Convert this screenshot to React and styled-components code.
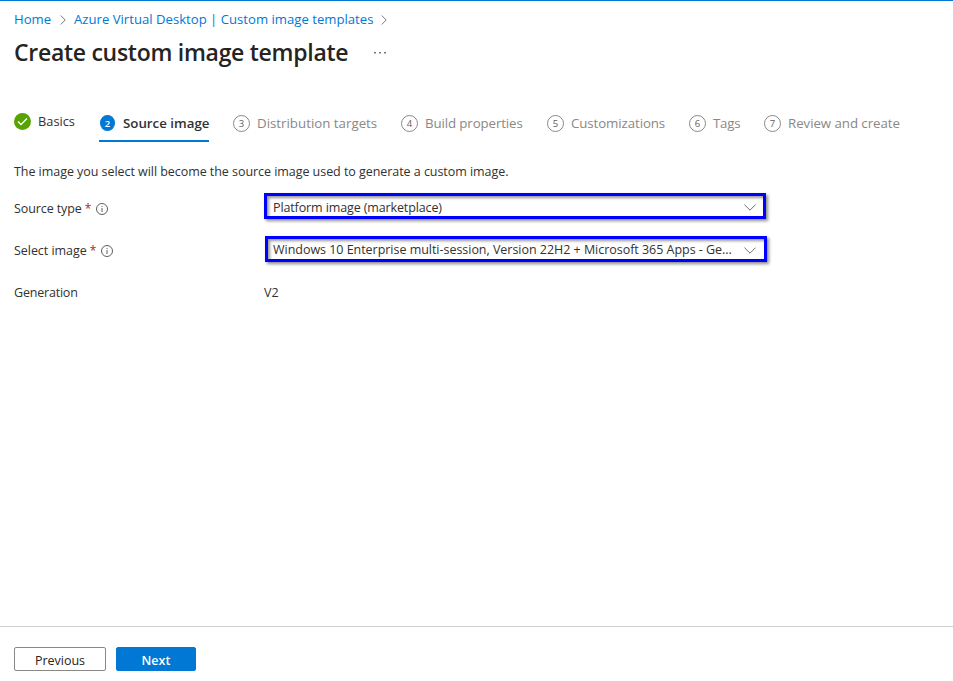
import React from "react";
import styled, { createGlobalStyle } from "styled-components";

const GlobalStyle = createGlobalStyle`
  * { box-sizing: border-box; }
  body {
    margin: 0;
    background: #fff;
    color: #323130;
    font-family: "Segoe UI", "Open Sans", "Noto Sans", sans-serif;
    font-size: 12.5px;
    line-height: 18px;
  }
`;

const Page = styled.div`
  display: flex;
  flex-direction: column;
  height: 681px;
  border-top: 1px solid #0078d4;
  overflow: hidden;
`;

const Text = styled.span`
  white-space: nowrap;
  letter-spacing: ${(p) => p.$ls || 0}px;
`;

const Breadcrumb = styled.nav`
  display: flex;
  align-items: center;
  height: 18px;
  margin: 9px 0 0 14px;
`;

const Crumb = styled.a`
  width: ${(p) => p.$w}px;
  color: #0078d4;
  font-size: 13.15px;
  white-space: nowrap;
`;

const CrumbArrow = styled.svg`
  display: block;
  width: 6px;
  height: 10px;
  margin: 2px 8px 0;
  fill: none;
  stroke: #7a7876;
`;

const TitleRow = styled.header`
  display: flex;
  align-items: center;
  height: 32px;
  margin: 8px 0 0 14px;
`;

const Title = styled.h1`
  width: 360px;
  margin: 0;
  color: #252423;
  font-size: 23px;
  font-weight: 600;
  line-height: 32px;
  white-space: nowrap;
  letter-spacing: -0.28px;
`;

const More = styled.svg`
  width: 12px;
  height: 2px;
  margin-top: 2px;
  fill: #797775;
`;

const Tabs = styled.div`
  display: flex;
  align-items: flex-start;
  gap: 24px;
  height: 37px;
  margin: 37px 0 0 14px;
`;

const Tab = styled.div`
  display: flex;
  flex: none;
  align-items: center;
  width: ${(p) => p.$w}px;
  height: ${(p) => (p.$done ? 34 : 37)}px;
  padding-left: ${(p) => (p.$active ? 1 : 0)}px;
  border-bottom: 2px solid ${(p) => (p.$active ? "#0078d4" : "transparent")};
  color: ${(p) => (p.$active || p.$done ? "#323130" : "#8a8886")};
  font-size: ${(p) => (p.$done ? 12.8 : 13.3)}px;
  font-weight: ${(p) => (p.$active ? 600 : 400)};
`;

const Step = styled.span`
  display: flex;
  flex: none;
  align-items: center;
  justify-content: center;
  width: ${(p) => (p.$active ? 15 : 17)}px;
  height: ${(p) => (p.$active ? 16 : 17)}px;
  margin: 1px ${(p) => (p.$active ? 8 : 7)}px 0 0;
  border: 1px solid ${(p) => (p.$active ? "#0078d4" : "#8a8886")};
  border-radius: 50%;
  background: ${(p) => (p.$active ? "#0078d4" : "#fff")};
  color: ${(p) => (p.$active ? "#fff" : "#605e5c")};
  font-size: 9.5px;
  line-height: 15px;
`;

const Check = styled.svg`
  flex: none;
  width: 17px;
  height: 17px;
  margin: 1px 7px 0 0;
`;

const Intro = styled.p`
  margin: 21px 0 0 14px;
  white-space: nowrap;
  letter-spacing: -0.05px;
`;

const Form = styled.div`
  display: grid;
  grid-template-columns: 250px 503px;
  grid-template-rows: 26px 26px 26px;
  row-gap: 16px;
  margin: 15px 0 0 14px;
  letter-spacing: -0.06px;
`;

const Label = styled.label`
  display: flex;
  align-items: center;
  height: 26px;
`;

const Required = styled.span`
  margin: -1px 5px 0 3px;
  color: #a4262c;
  font-size: 12px;
`;

const Info = styled.svg`
  width: 12px;
  height: 12px;
  margin-top: 0;
`;

const Select = styled.div`
  display: flex;
  align-items: center;
  justify-content: space-between;
  width: 502px;
  height: 26px;
  margin: ${(p) => (p.$second ? "-2px 0 0 1px" : "-3px 0 0 0")};
  padding: ${(p) => (p.$second ? "2px 8px 0 5px" : "3px 7px 0 6px")};
  border: 3px solid #0000ff;
  background: #fff;
  box-shadow:
    2px 2px 3px rgba(0, 0, 0, 0.45),
    inset 2px 2px 3px rgba(0, 0, 0, 0.4);
`;

const Chevron = styled.svg`
  width: 12px;
  height: 7px;
  fill: none;
  stroke: #706e6c;
`;

const Value = styled.span`
  display: flex;
  align-items: center;
  height: 26px;
`;

const Footer = styled.footer`
  display: flex;
  gap: 10px;
  height: 55px;
  margin-top: auto;
  padding: 20px 0 0 14px;
  border-top: 1px solid #d2d0ce;
`;

const Button = styled.button`
  width: ${(p) => (p.$primary ? 80 : 92)}px;
  height: 24px;
  padding: 3px 0 0;
  border: 1px solid ${(p) => (p.$primary ? "#0078d4" : "#8a8886")};
  border-radius: 2px;
  background: ${(p) => (p.$primary ? "#0078d4" : "#fff")};
  color: ${(p) => (p.$primary ? "#fff" : "#252423")};
  font: ${(p) => (p.$primary ? 600 : 500)} 12.5px/18px "Segoe UI", "Open Sans", "Noto Sans", sans-serif;
`;

const steps = [
  { n: 3, name: "Distribution targets", w: 144 },
  { n: 4, name: "Build properties", w: 122, ls: -0.12 },
  { n: 5, name: "Customizations", w: 118, ls: -0.1 },
  { n: 6, name: "Tags", w: 51, ls: -0.2 },
  { n: 7, name: "Review and create", w: 136, ls: -0.06 },
];

function Arrow() {
  return (
    <CrumbArrow viewBox="0 0 6 10">
      <path d="M.7.5 5.2 5 .7 9.5" />
    </CrumbArrow>
  );
}

function InfoIcon() {
  return (
    <Info viewBox="0 0 12 12">
      <circle cx="6" cy="6" r="5.5" fill="none" stroke="#605e5c" />
      <path d="M6 5v4M6 3v1" stroke="#605e5c" />
    </Info>
  );
}

function Dropdown({ children, second }) {
  return (
    <Select $second={second}>
      <Text $ls={second ? -0.03 : -0.12}>{children}</Text>
      <Chevron viewBox="0 0 12 7">
        <path d="M.4.6 6 6.2 11.6.6" />
      </Chevron>
    </Select>
  );
}

export default function App() {
  return (
    <Page>
      <GlobalStyle />
      <Breadcrumb>
        <Crumb $w={38}>Home</Crumb>
        <Arrow />
        <Crumb $w={299}>Azure Virtual Desktop | Custom image templates</Crumb>
        <Arrow />
      </Breadcrumb>
      <TitleRow>
        <Title>Create custom image template</Title>
        <More viewBox="0 0 12 2">
          <path d="M0 0h2v1.5H0zM5 0h2v1.5H5zM10 0h2v1.5h-2z" />
        </More>
      </TitleRow>
      <Tabs>
        <Tab $w={61} $done>
          <Check viewBox="0 0 17 17">
            <circle cx="8.5" cy="8.5" r="8.5" fill="#57a300" />
            <path d="m4 8.5 3 3 6-6" fill="none" stroke="#fff" strokeWidth="1.4" />
          </Check>
          <Text>Basics</Text>
        </Tab>
        <Tab $w={110} $active>
          <Step $active>2</Step>
          <Text>Source image</Text>
        </Tab>
        {steps.map((s) => (
          <Tab key={s.n} $w={s.w}>
            <Step>{s.n}</Step>
            <Text $ls={s.ls}>{s.name}</Text>
          </Tab>
        ))}
      </Tabs>
      <Intro>The image you select will become the source image used to generate a custom image.</Intro>
      <Form>
        <Label>
          <Text $ls={-0.1}>Source type</Text>
          <Required>*</Required>
          <InfoIcon />
        </Label>
        <Dropdown>Platform image (marketplace)</Dropdown>
        <Label>
          <Text $ls={-0.05}>Select image</Text>
          <Required>*</Required>
          <InfoIcon />
        </Label>
        <Dropdown second>
          Windows 10 Enterprise multi-session, Version 22H2 + Microsoft 365 Apps - Ge...
        </Dropdown>
        <Label>
          <Text $ls={-0.2}>Generation</Text>
        </Label>
        <Value>V2</Value>
      </Form>
      <Footer>
        <Button>Previous</Button>
        <Button $primary>Next</Button>
      </Footer>
    </Page>
  );
}
